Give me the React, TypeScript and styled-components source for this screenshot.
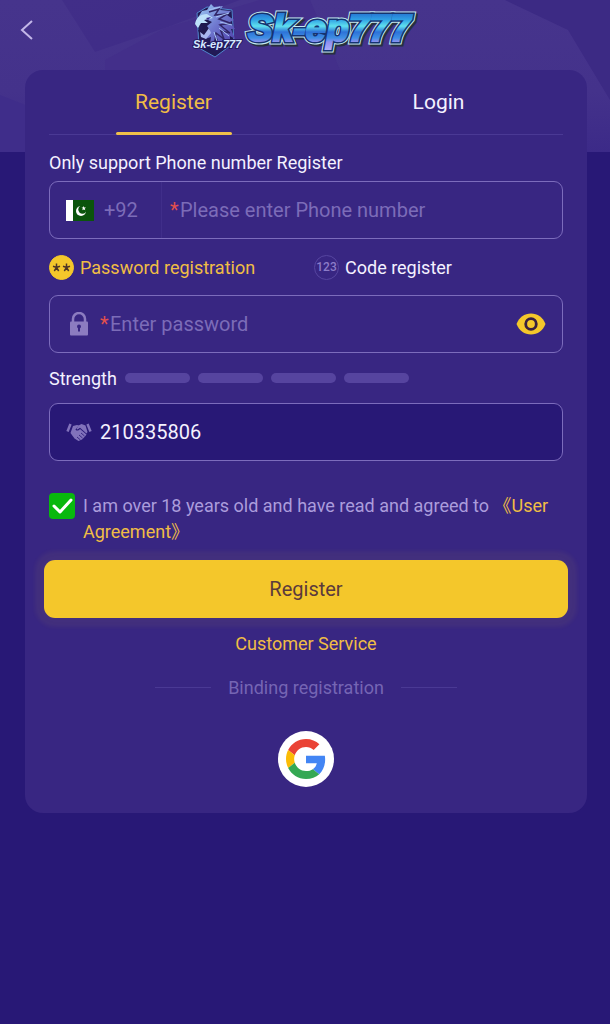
import React, { useState } from 'react';
import styled, { createGlobalStyle } from 'styled-components';

const GlobalStyle = createGlobalStyle`
  * {
    box-sizing: border-box;
  }

  body {
    margin: 0;
    background-color: #281876;
    font-family: Roboto, 'Noto Sans CJK SC', sans-serif;
    font-size: 18px;
    color: #f4f1ff;
  }

  button,
  input {
    font-family: inherit;
  }
`;

const Page = styled.div`
  position: relative;
  min-height: 100vh;
  padding-bottom: 24px;
`;

const Backdrop = styled.svg`
  position: absolute;
  top: 0;
  left: 0;
  width: 100%;
  height: 152px;
`;

const Header = styled.header`
  position: relative;
  display: grid;
  grid-template-columns: 48px 1fr 48px;
  align-items: center;
  height: 60px;
  margin-bottom: 10px;
`;

const BackButton = styled.button`
  display: flex;
  align-items: center;
  padding: 0 0 0 18px;
  background: none;
  border: none;
  cursor: pointer;
`;

const LogoWrapper = styled.div`
  display: flex;
  justify-content: center;
`;

const Card = styled.main`
  position: relative;
  margin: 0 23px 0 25px;
  padding: 0 24px 26px;
  border-radius: 18px;
  background-color: #382682;
`;

const Tabs = styled.nav`
  display: flex;
  gap: 16px;
  height: 65px;
  border-bottom: 1px solid #4a3994;
`;

const Tab = styled.button<{ $active?: boolean }>`
  position: relative;
  flex: 1;
  padding: 0;
  background: none;
  border: none;
  font-size: 21px;
  color: ${({ $active }) => ($active ? '#f0bd45' : '#f4f1ff')};
  cursor: pointer;

  &::after {
    content: '';
    display: ${({ $active }) => ($active ? 'block' : 'none')};
    position: absolute;
    bottom: -1px;
    left: 50%;
    width: 116px;
    height: 3px;
    margin-left: -58px;
    border-radius: 2px;
    background-color: #f0c04a;
  }
`;

const Label = styled.label`
  display: block;
  padding: 16px 0 6px;
  line-height: 24px;
`;

const Field = styled.div<{ $filled?: boolean }>`
  display: flex;
  align-items: center;
  height: 58px;
  padding: 0 16px;
  border: 1px solid #7c6cbc;
  border-radius: 9px;
  background-color: ${({ $filled }) => ($filled ? '#281876' : 'transparent')};
`;

const FieldIcon = styled.span`
  display: flex;
  justify-content: center;
  width: 26px;
  margin-right: 8px;
`;

const Prefix = styled.span`
  display: flex;
  align-items: center;
  gap: 10px;
  align-self: stretch;
  width: 96px;
  margin-right: 8px;
  border-right: 1px solid #402e8a;
  font-size: 20px;
  color: #7c6cb8;
`;

const Required = styled.span`
  width: 10px;
  font-size: 20px;
  color: #e2504d;
`;

const Input = styled.input`
  flex: 1;
  min-width: 0;
  padding: 0;
  background: none;
  border: none;
  outline: none;
  font-size: 20px;
  color: #f4f1ff;

  &::placeholder {
    color: #7c6cb8;
    opacity: 1;
  }
`;

const EyeButton = styled.button`
  display: flex;
  padding: 0;
  background: none;
  border: none;
  cursor: pointer;
`;

const Modes = styled.div`
  display: grid;
  grid-template-columns: 265px 1fr;
  height: 56px;
`;

const Mode = styled.button<{ $active?: boolean }>`
  display: flex;
  align-items: center;
  gap: 6px;
  padding: 0;
  background: none;
  border: none;
  font-size: 18px;
  color: ${({ $active }) => ($active ? '#f0bd45' : '#f4f1ff')};
  cursor: pointer;
`;

const Badge = styled.span<{ $active?: boolean }>`
  display: flex;
  align-items: center;
  justify-content: center;
  width: 25px;
  height: 25px;
  border: 1px solid ${({ $active }) => ($active ? '#f4c72b' : '#5645a0')};
  border-radius: 50%;
  background-color: ${({ $active }) => ($active ? '#f4c72b' : 'transparent')};
  font-size: 12px;
  font-weight: 500;
  color: #8c7cc8;
`;

const Strength = styled.div`
  display: flex;
  align-items: center;
  gap: 8px;
  height: 50px;
`;

const StrengthBar = styled.span`
  width: 65px;
  height: 10px;
  border-radius: 5px;
  background-color: #56449f;
`;

const Agreement = styled.div`
  display: flex;
  gap: 8px;
  padding: 32px 0 15px;
`;

const CheckWrapper = styled.span`
  position: relative;
  width: 26px;
  height: 26px;
  flex-shrink: 0;

  svg {
    position: absolute;
    top: 0;
    left: 0;
    pointer-events: none;
  }
`;

const Checkbox = styled.input`
  appearance: none;
  display: block;
  width: 26px;
  height: 26px;
  margin: 0;
  border-radius: 4px;
  background-color: #08b80e;
`;

const AgreementText = styled.label`
  line-height: 26px;
  color: #ab9cdc;
`;

const Link = styled.a`
  color: #f0bd45;
  text-decoration: none;
`;

const SubmitButton = styled.button`
  display: block;
  width: calc(100% + 10px);
  height: 58px;
  margin: 0 -5px;
  padding: 0;
  border: none;
  border-radius: 11px;
  background-color: #f4c72b;
  box-shadow: 0 0 4px 9px rgba(244, 199, 43, 0.06);
  font-size: 20px;
  color: #5b3a3c;
  cursor: pointer;
`;

const Service = styled.div`
  padding: 14px 0;
  line-height: 24px;
  text-align: center;
`;

const Divider = styled.div`
  display: flex;
  align-items: center;
  justify-content: center;
  gap: 17px;
  height: 34px;
  color: #7565b4;

  &::before,
  &::after {
    content: '';
    width: 56px;
    height: 1px;
    background-color: #4a3994;
  }
`;

const GoogleButton = styled.button`
  display: flex;
  align-items: center;
  justify-content: center;
  width: 56px;
  height: 56px;
  margin: 27px auto 0;
  padding: 0;
  border: none;
  border-radius: 50%;
  background-color: #fff;
  cursor: pointer;
`;

const HeaderBackdrop = () => (
  <Backdrop viewBox="0 0 610 152" preserveAspectRatio="none" aria-hidden="true">
    <defs>
      <linearGradient id="sky" x1="0" y1="0" x2="0" y2="1">
        <stop offset="0" stopColor="#46348c" />
        <stop offset="0.6" stopColor="#44328b" />
        <stop offset="1" stopColor="#3c2a88" />
      </linearGradient>
      <linearGradient id="facet" x1="0" y1="0" x2="1" y2="1">
        <stop offset="0" stopColor="#412e88" />
        <stop offset="1" stopColor="#3f2c88" />
      </linearGradient>
    </defs>
    <rect width="610" height="152" fill="url(#sky)" />
    <path d="M62 0H240L165 28L95 52Z" fill="url(#facet)" />
    <path d="M105 60L165 28L260 0H310L340 70H105Z" fill="#432f8a" />
    <path d="M505 0H610V100L568 30Z" fill="#3c2a84" />
    <path d="M0 95L25 105V152H0Z" fill="#3f2d8a" />
  </Backdrop>
);

const Crest = () => (
  <svg width="52" height="58" viewBox="0 0 52 58" aria-hidden="true">
    <defs>
      <linearGradient id="mane" x1="0" y1="0" x2="1" y2="1">
        <stop offset="0" stopColor="#9fd3f7" />
        <stop offset="0.5" stopColor="#6f78cf" />
        <stop offset="1" stopColor="#4b3aa6" />
      </linearGradient>
    </defs>
    <path d="M5 12L15 6L40 9L42 42L23 56L7 47Z" fill="#211a55" stroke="#4f86cc" strokeWidth="1" />
    <path
      d="M4 20L10 10L15 9L19 3L22 6L31 5L28 9L39 10L35 14L42 19L38 21L43 28L39 28L43 38L38 35L38 44L31 38L28 45L25 37L18 43L19 36L13 38L17 30L13 23L5 26Z"
      fill="url(#mane)"
    />
    <path d="M5 22L14 18L20 21L15 25L18 29L14 36L8 34L6 29L10 30L11 25L6 25Z" fill="#1f184e" />
    <path d="M3 23C4 17 8 13 15 13L21 17L12 19L16 22L9 22L6 27Z" fill="#bde1fa" />
    <path d="M8 31L12 34L17 27L19 32L14 38L9 36Z" fill="#a7b5ee" />
    <path d="M14 17L19 16L16 19Z" fill="#3a2b8c" />
    <path
      d="M17 11L27 8L23 14L35 13L27 18L38 22L28 24L38 32L29 30L32 38L24 32L23 39"
      fill="none"
      stroke="#302566"
      strokeWidth="1.5"
    />
    <path d="M17 9L28 6M24 16L37 12M28 21L40 24M27 27L37 35M22 31L25 40" fill="none" stroke="#a8c4f4" strokeWidth="1" />
    <text
      x="1"
      y="47"
      fontFamily="'Liberation Sans', sans-serif"
      fontSize="11"
      fontWeight="700"
      fontStyle="italic"
      fill="#d6eaff"
      stroke="#251a61"
      strokeWidth="2"
      paintOrder="stroke"
    >
      Sk-ep777
    </text>
  </svg>
);

const Wordmark = () => (
  <svg width="174" height="58" viewBox="0 0 174 58" role="img" aria-label="Sk-ep777">
    <defs>
      <linearGradient id="ice" x1="0" y1="10" x2="0" y2="52" gradientUnits="userSpaceOnUse">
        <stop offset="0" stopColor="#2367cc" />
        <stop offset="0.2" stopColor="#2f9fe4" />
        <stop offset="0.36" stopColor="#5fe0ee" />
        <stop offset="0.5" stopColor="#2d72d8" />
        <stop offset="0.64" stopColor="#3f8fe4" />
        <stop offset="0.74" stopColor="#8f8ff0" />
        <stop offset="1" stopColor="#b9b8ff" />
      </linearGradient>
    </defs>
    <g
      fontFamily="'Liberation Sans', sans-serif"
      fontSize="37"
      fontWeight="700"
      fontStyle="italic"
      strokeLinejoin="miter"
    >
      <text x="6" y="42" fill="#28303f" stroke="#28303f" strokeWidth="7">Sk-ep777</text>
      <text x="4" y="40" fill="#c4eaf0" stroke="#c4eaf0" strokeWidth="7">Sk-ep777</text>
      <text x="4" y="40" fill="#15336f" stroke="#15336f" strokeWidth="5">Sk-ep777</text>
      <text x="4" y="40" fill="url(#ice)" stroke="url(#ice)" strokeWidth="2">Sk-ep777</text>
    </g>
  </svg>
);

const Flag = () => (
  <svg width="28" height="21" viewBox="0 0 28 21" aria-hidden="true">
    <rect width="28" height="21" fill="#0b540c" />
    <rect width="7" height="21" fill="#fff" />
    <circle cx="15" cy="11" r="5" fill="#fff" />
    <circle cx="16.500" cy="9.500" r="4.200" fill="#0b540c" />
    <path d="M17.500 6L18.300 7.500L20 7.500L18.700 8.700L19.300 10.300L17.700 9.400L16.300 10.300L16.800 8.600L15.500 7.600L17 7.500Z" fill="#fff" />
  </svg>
);

const Stars = () => (
  <svg width="19" height="9" viewBox="0 0 19 9" fill="none" stroke="#4d3527" strokeWidth="1.5" aria-hidden="true" style={{ flexShrink: 0 }}>
    <path d="M4.500 0.500V4.500M1 3.300L4.500 4.500L8 3.300M2.300 8L4.500 4.500L6.700 8" />
    <path d="M14.500 0.500V4.500M11 3.300L14.500 4.500L18 3.300M12.300 8L14.500 4.500L16.700 8" />
  </svg>
);

const Lock = () => (
  <svg width="20" height="24" viewBox="0 0 20 24" aria-hidden="true">
    <path d="M4 10V7A6 6 0 0 1 16 7V10" fill="none" stroke="#8c7cc0" strokeWidth="2.5" />
    <rect x="1" y="9.500" width="18" height="14" rx="1" fill="#8c7cc0" />
    <circle cx="10" cy="14.500" r="2" fill="#382682" />
    <path d="M9 15H11V19.500H9Z" fill="#382682" />
  </svg>
);

const Eye = () => (
  <svg width="30" height="22" viewBox="0 0 30 22" aria-hidden="true">
    <path d="M0.500 11C3 4.500 8.500 0.500 15 0.500S27 4.500 29.500 11C27 17.500 21.500 21.500 15 21.500S3 17.500 0.500 11Z" fill="#f4c72b" />
    <circle cx="15" cy="11" r="5.300" fill="none" stroke="#382040" strokeWidth="2.800" />
  </svg>
);

const Handshake = () => (
  <svg width="26" height="20" viewBox="0 0 26 20" aria-hidden="true">
    <path d="M4.500 2L1.500 9.500M21.500 2L24.500 9.500" fill="none" stroke="#8172bb" strokeWidth="2.500" />
    <path
      d="M7 4L11 3L13 3.500L9.500 7.500C10 9 12.500 9 14 7L20.500 12.500L19 14.500L16 17.500L12.500 19L8.500 16.500L4.500 11Z"
      fill="#8172bb"
    />
    <path d="M12.500 3.500L15.500 2L19.500 3.500L21.500 10L20.500 11.500L14 5.700L11.500 7.500L10.500 7Z" fill="#8172bb" />
    <path d="M13 13L16.500 16M15 11L18.500 14M11 15L14.500 18" stroke="#281876" strokeWidth="0.800" />
  </svg>
);

const Google = () => (
  <svg width="40" height="40" viewBox="0 0 48 48" aria-hidden="true">
    <path fill="#ea4335" d="M24 9.500c3.540 0 6.710 1.220 9.210 3.600l6.850-6.850C35.900 2.380 30.470 0 24 0 14.620 0 6.510 5.380 2.560 13.220l7.980 6.190C12.430 13.720 17.740 9.500 24 9.500z" />
    <path fill="#4285f4" d="M46.980 24.550c0-1.570-.15-3.090-.38-4.550H24v9.020h12.940c-.58 2.960-2.260 5.480-4.780 7.180l7.730 6c4.510-4.180 7.090-10.360 7.090-17.650z" />
    <path fill="#fbbc05" d="M10.530 28.590c-.48-1.450-.76-2.990-.76-4.590s.27-3.140.76-4.590l-7.980-6.190C.92 16.460 0 20.120 0 24c0 3.880.92 7.540 2.560 10.780l7.970-6.190z" />
    <path fill="#34a853" d="M24 48c6.480 0 11.930-2.130 15.890-5.810l-7.730-6c-2.150 1.450-4.920 2.300-8.160 2.300-6.260 0-11.570-4.220-13.470-9.910l-7.980 6.190C6.510 42.620 14.620 48 24 48z" />
  </svg>
);

const App: React.FC = () => {
  const [tab, setTab] = useState('register');
  const [mode, setMode] = useState('password');
  const [agreed, setAgreed] = useState(true);
  const [visible, setVisible] = useState(false);

  return (
    <Page>
      <GlobalStyle />
      <HeaderBackdrop />
      <Header>
        <BackButton aria-label="Back">
          <svg width="16" height="22" viewBox="0 0 16 22" fill="none" stroke="#c3b7e8" strokeWidth="2" aria-hidden="true">
            <path d="M14 2L4 11L14 20" />
          </svg>
        </BackButton>
        <LogoWrapper>
          <Crest />
          <Wordmark />
        </LogoWrapper>
      </Header>
      <Card>
        <Tabs>
          <Tab $active={tab === 'register'} onClick={() => setTab('register')}>Register</Tab>
          <Tab $active={tab === 'login'} onClick={() => setTab('login')}>Login</Tab>
        </Tabs>
        <Label htmlFor="phone">Only support Phone number Register</Label>
        <Field>
          <Prefix>
            <Flag />
            +92
          </Prefix>
          <Required>*</Required>
          <Input id="phone" type="tel" placeholder="Please enter Phone number" />
        </Field>
        <Modes>
          <Mode $active={mode === 'password'} onClick={() => setMode('password')}>
            <Badge $active>
              <Stars />
            </Badge>
            Password registration
          </Mode>
          <Mode $active={mode === 'code'} onClick={() => setMode('code')}>
            <Badge>123</Badge>
            Code register
          </Mode>
        </Modes>
        <Field>
          <FieldIcon>
            <Lock />
          </FieldIcon>
          <Required>*</Required>
          <Input type={visible ? 'text' : 'password'} placeholder="Enter password" aria-label="Password" />
          <EyeButton aria-label="Show password" onClick={() => setVisible(!visible)}>
            <Eye />
          </EyeButton>
        </Field>
        <Strength>
          Strength
          <StrengthBar />
          <StrengthBar />
          <StrengthBar />
          <StrengthBar />
        </Strength>
        <Field $filled>
          <FieldIcon>
            <Handshake />
          </FieldIcon>
          <Input type="text" defaultValue="210335806" aria-label="Invitation code" />
        </Field>
        <Agreement>
          <CheckWrapper>
            <Checkbox id="agree" type="checkbox" checked={agreed} onChange={() => setAgreed(!agreed)} />
            {agreed && (
              <svg width="26" height="26" viewBox="0 0 26 26" fill="none" stroke="#fff" strokeWidth="3" strokeLinecap="round" strokeLinejoin="round" aria-hidden="true">
                <path d="M5 13L11 19L22 7" />
              </svg>
            )}
          </CheckWrapper>
          <AgreementText htmlFor="agree">
            I am over 18 years old and have read and agreed to <Link href="#agreement">《User Agreement》</Link>
          </AgreementText>
        </Agreement>
        <SubmitButton>Register</SubmitButton>
        <Service>
          <Link href="#service">Customer Service</Link>
        </Service>
        <Divider>Binding registration</Divider>
        <GoogleButton aria-label="Register with Google">
          <Google />
        </GoogleButton>
      </Card>
    </Page>
  );
};

export default App;
